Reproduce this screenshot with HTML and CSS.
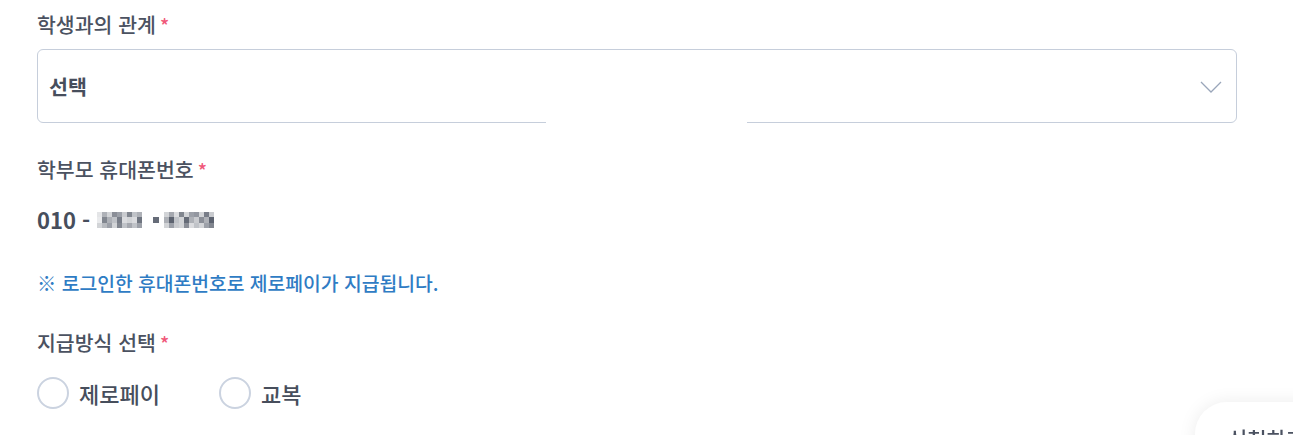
FILE: index.html
```html
<!DOCTYPE html>
<html lang="ko">
<head>
<meta charset="utf-8">
<title>지급 정보</title>
<link rel="stylesheet" href="styles.css">
</head>
<body>
<main class="form">
  <div class="label label-first">학생과의 관계<span class="req">*</span></div>
  <div class="select-wrap">
    <div class="select">
      <span class="select-value">선택</span>
      <svg class="chevron" width="22" height="12" viewBox="0 0 22 12" aria-hidden="true">
        <path d="M1 1 L11 11 L21 1" fill="none" stroke="#9aa6ba" stroke-width="1.3"/>
      </svg>
    </div>
    <div class="select-mask"></div>
  </div>

  <div class="label label-phone">학부모 휴대폰번호<span class="req">*</span></div>
  <div class="phone">
    <span class="phone-prefix">010 -</span>
    <svg class="mosaic" width="118" height="18" viewBox="0 0 118 18" aria-hidden="true">
      <g fill="#4b5260">
        <rect x="0" y="1" width="5" height="5" opacity="0.15"/>
        <rect x="5" y="1" width="5" height="5" opacity="0.45"/>
        <rect x="10" y="1" width="5" height="5" opacity="0.25"/>
        <rect x="15" y="1" width="5" height="5" opacity="0.65"/>
        <rect x="20" y="1" width="5" height="5" opacity="0.55"/>
        <rect x="25" y="1" width="5" height="5" opacity="0.3"/>
        <rect x="30" y="1" width="5" height="5" opacity="0.7"/>
        <rect x="35" y="1" width="5" height="5" opacity="0.35"/>
        <rect x="40" y="1" width="5" height="5" opacity="0.45"/>
        <rect x="0" y="6" width="5" height="6" opacity="0.12"/>
        <rect x="5" y="6" width="5" height="6" opacity="0.7"/>
        <rect x="10" y="6" width="5" height="6" opacity="0.45"/>
        <rect x="15" y="6" width="5" height="6" opacity="0.35"/>
        <rect x="20" y="6" width="5" height="6" opacity="0.75"/>
        <rect x="25" y="6" width="5" height="6" opacity="0.2"/>
        <rect x="30" y="6" width="5" height="6" opacity="0.25"/>
        <rect x="35" y="6" width="5" height="6" opacity="0.2"/>
        <rect x="40" y="6" width="5" height="6" opacity="0.8"/>
        <rect x="0" y="12" width="5" height="5" opacity="0.25"/>
        <rect x="5" y="12" width="5" height="5" opacity="0.4"/>
        <rect x="10" y="12" width="5" height="5" opacity="0.55"/>
        <rect x="15" y="12" width="5" height="5" opacity="0.25"/>
        <rect x="20" y="12" width="5" height="5" opacity="0.7"/>
        <rect x="25" y="12" width="5" height="5" opacity="0.35"/>
        <rect x="30" y="12" width="5" height="5" opacity="0.5"/>
        <rect x="35" y="12" width="5" height="5" opacity="0.35"/>
        <rect x="40" y="12" width="5" height="5" opacity="0.55"/>
        <rect x="56" y="6" width="6" height="6" opacity="0.85"/>
        <rect x="67" y="1" width="5" height="5" opacity="0.25"/>
        <rect x="72" y="1" width="5" height="5" opacity="0.5"/>
        <rect x="77" y="1" width="5" height="5" opacity="0.2"/>
        <rect x="82" y="1" width="5" height="5" opacity="0.7"/>
        <rect x="87" y="1" width="5" height="5" opacity="0.25"/>
        <rect x="92" y="1" width="5" height="5" opacity="0.55"/>
        <rect x="97" y="1" width="5" height="5" opacity="0.6"/>
        <rect x="102" y="1" width="5" height="5" opacity="0.25"/>
        <rect x="107" y="1" width="5" height="5" opacity="0.75"/>
        <rect x="112" y="1" width="5" height="5" opacity="0.3"/>
        <rect x="67" y="6" width="5" height="6" opacity="0.45"/>
        <rect x="72" y="6" width="5" height="6" opacity="0.9"/>
        <rect x="77" y="6" width="5" height="6" opacity="0.35"/>
        <rect x="82" y="6" width="5" height="6" opacity="0.25"/>
        <rect x="87" y="6" width="5" height="6" opacity="0.85"/>
        <rect x="92" y="6" width="5" height="6" opacity="0.45"/>
        <rect x="97" y="6" width="5" height="6" opacity="0.3"/>
        <rect x="102" y="6" width="5" height="6" opacity="0.65"/>
        <rect x="107" y="6" width="5" height="6" opacity="0.45"/>
        <rect x="112" y="6" width="5" height="6" opacity="0.9"/>
        <rect x="67" y="12" width="5" height="5" opacity="0.25"/>
        <rect x="72" y="12" width="5" height="5" opacity="0.55"/>
        <rect x="77" y="12" width="5" height="5" opacity="0.3"/>
        <rect x="82" y="12" width="5" height="5" opacity="0.25"/>
        <rect x="87" y="12" width="5" height="5" opacity="0.65"/>
        <rect x="92" y="12" width="5" height="5" opacity="0.2"/>
        <rect x="97" y="12" width="5" height="5" opacity="0.35"/>
        <rect x="102" y="12" width="5" height="5" opacity="0.25"/>
        <rect x="107" y="12" width="5" height="5" opacity="0.55"/>
        <rect x="112" y="12" width="5" height="5" opacity="0.7"/>
      </g>
    </svg>
  </div>

  <p class="notice">※ 로그인한 휴대폰번호로 제로페이가 지급됩니다.</p>

  <div class="label label-method">지급방식 선택<span class="req">*</span></div>
  <div class="radios">
    <label class="radio"><span class="radio-circle"></span><span class="radio-text">제로페이</span></label>
    <label class="radio"><span class="radio-circle"></span><span class="radio-text">교복</span></label>
  </div>
</main>

<div class="float-btn"><span class="float-text">신청하기</span></div>
</body>
</html>
```

FILE: styles.css
```css
* { box-sizing: border-box; }

html, body {
  margin: 0;
  padding: 0;
  background: #ffffff;
  overflow: hidden;
}

body {
  font-family: "Noto Sans CJK KR", "Noto Sans", sans-serif;
  color: #4b5261;
  width: 1293px;
  height: 435px;
}

.form {
  padding: 10px 0 0 37px;
  width: 1237px;
}

.label {
  font-size: 20.5px;
  font-weight: 500;
  line-height: 28px;
  height: 28px;
  color: #4b5261;
}

.req {
  color: #f0587a;
  margin-left: 4px;
  font-size: 19px;
}

.select-wrap {
  position: relative;
  margin-top: 11px;
}

.select {
  height: 74px;
  border: 1px solid #c6cedb;
  border-radius: 6px;
  display: flex;
  align-items: center;
  justify-content: space-between;
  padding: 0 14px 0 11px;
}

.select-value {
  font-size: 20.6px;
  font-weight: 700;
  color: #474e5c;
  line-height: 28px;
}

.chevron {
  display: block;
  margin-top: 2px;
}

.select-mask {
  position: absolute;
  left: 509px;
  width: 201px;
  top: 60px;
  height: 20px;
  background: #ffffff;
}

.label-phone {
  margin-top: 32px;
}

.phone {
  margin-top: 22px;
  height: 28px;
  display: flex;
  align-items: center;
}

.phone-prefix {
  font-size: 22px;
  font-weight: 700;
  color: #474e5c;
  line-height: 28px;
}

.mosaic {
  display: block;
  margin-left: 7px;
  margin-top: 1px;
}

.notice {
  margin: 36px 0 0;
  font-size: 19.3px;
  font-weight: 500;
  line-height: 28px;
  color: #2f7cc4;
}

.label-method {
  margin-top: 31px;
}

.radios {
  margin-top: 21px;
  display: flex;
  align-items: center;
  gap: 59px;
}

.radio {
  display: flex;
  align-items: center;
  gap: 10px;
}

.radio-circle {
  width: 32px;
  height: 32px;
  border: 2px solid #cbd3e0;
  border-radius: 50%;
  background: #ffffff;
}

.radio-text {
  font-size: 22px;
  font-weight: 500;
  line-height: 28px;
  color: #474e5c;
}

.float-btn {
  position: fixed;
  left: 1195px;
  top: 402px;
  width: 190px;
  height: 80px;
  background: #ffffff;
  border-radius: 32px;
  box-shadow: 0 0 18px rgba(0, 0, 0, 0.08);
  padding: 22px 0 0 33px;
}

.float-text {
  font-size: 21px;
  font-weight: 500;
  line-height: 28px;
  color: #4b5261;
  white-space: nowrap;
}
```
